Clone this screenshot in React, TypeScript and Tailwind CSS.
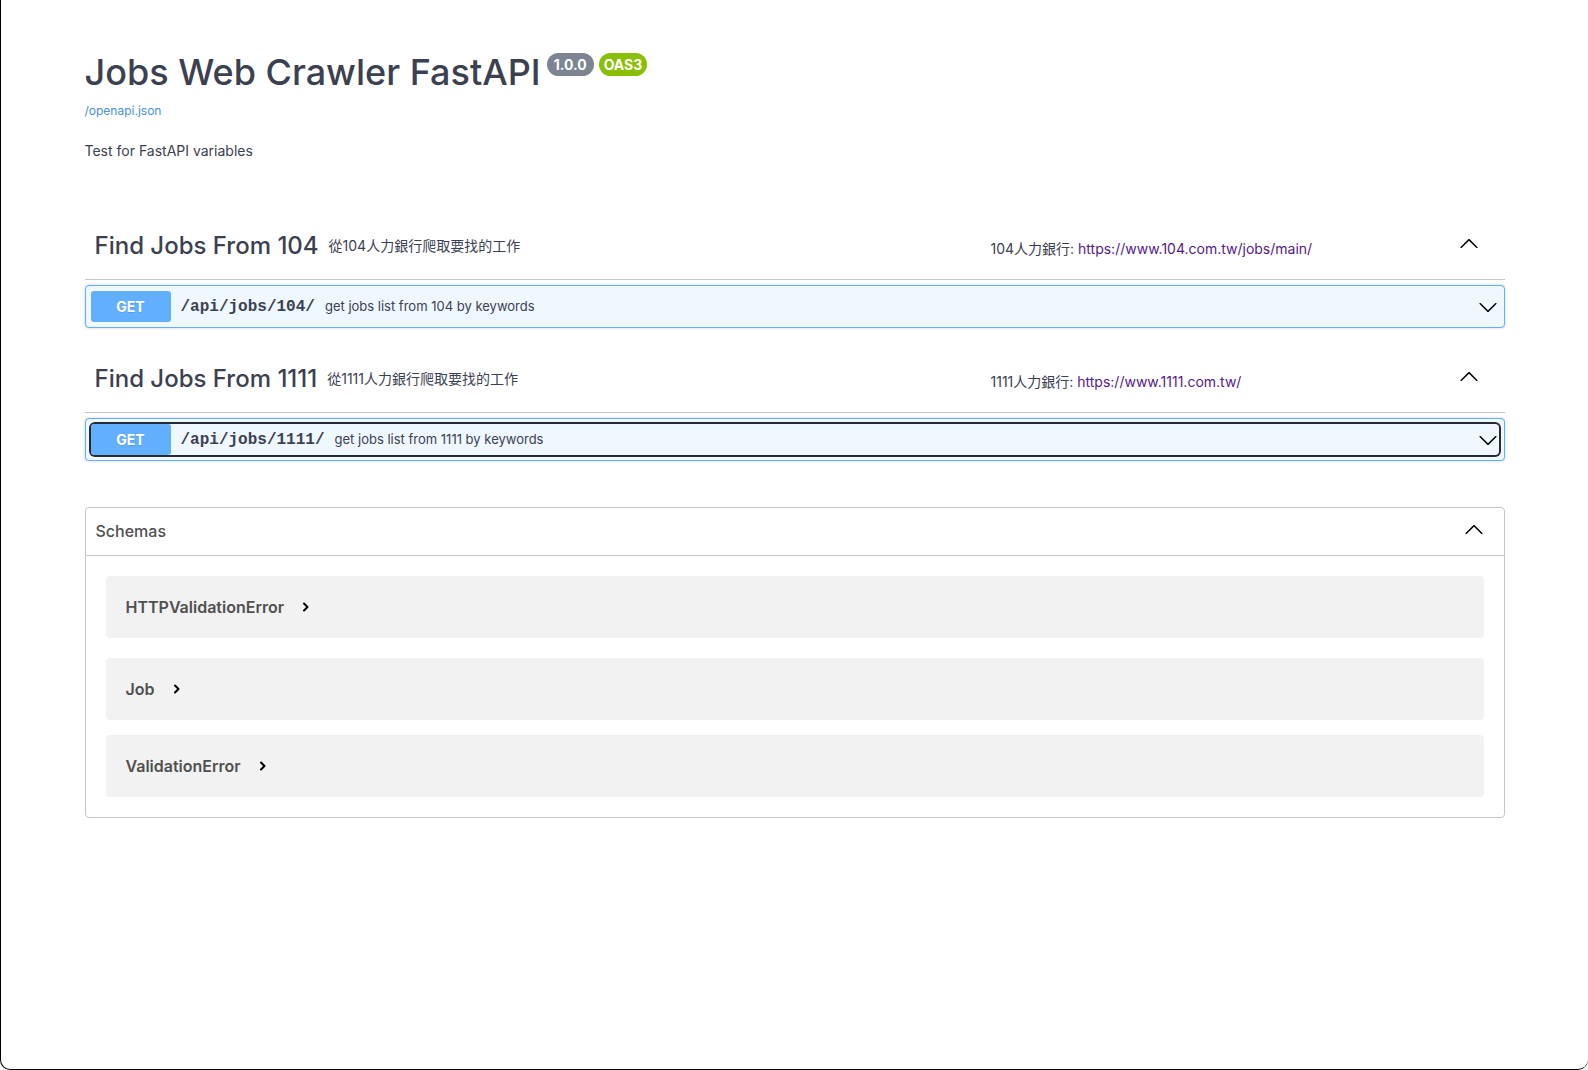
import React from 'react';

const sans = "font-[family-name:Inter,'Noto_Sans_CJK_TC',sans-serif]";

const ArrowUp = () => (
  <svg width="20" height="20" viewBox="0 0 20 20" className="relative -top-[3px] fill-black">
    <path d="M17.418 14.908c.272.268.709.268.979 0s.271-.701 0-.969l-7.908-7.83c-.27-.268-.707-.268-.979 0l-7.908 7.83c-.27.268-.27.701 0 .969.271.268.709.268.979 0L10 7.767l7.418 7.141z" />
  </svg>
);

const ArrowDown = () => (
  <svg width="20" height="20" viewBox="0 0 20 20" className="fill-black">
    <path d="M17.418 6.109c.272-.268.709-.268.979 0s.271.701 0 .969l-7.908 7.83c-.27.268-.707.268-.979 0l-7.908-7.83c-.27-.268-.27-.701 0-.969.271-.268.709-.268.979 0L10 13.25l7.418-7.141z" />
  </svg>
);

const Chevron = () => (
  <svg width="8" height="12" viewBox="0 0 8 12" fill="none" className="stroke-black">
    <polyline points="2,2.5 5.5,6 2,9.5" strokeWidth="2" strokeLinecap="round" strokeLinejoin="round" />
  </svg>
);

type Tag = {
  name: string;
  desc: string;
  docsLabel: string;
  docsUrl: string;
  path: string;
  summary: string;
  focused?: boolean;
};

const tags: Tag[] = [
  {
    name: 'Find Jobs From 104',
    desc: '從104人力銀行爬取要找的工作',
    docsLabel: '104人力銀行:',
    docsUrl: 'https://www.104.com.tw/jobs/main/',
    path: '/api/jobs/104/',
    summary: 'get jobs list from 104 by keywords',
  },
  {
    name: 'Find Jobs From 1111',
    desc: '從1111人力銀行爬取要找的工作',
    docsLabel: '1111人力銀行:',
    docsUrl: 'https://www.1111.com.tw/',
    path: '/api/jobs/1111/',
    summary: 'get jobs list from 1111 by keywords',
    focused: true,
  },
];

const TagSection = ({ tag }: { tag: Tag }) => (
  <div>
    <div className="flex h-[68px] items-center border-b border-[#c4c6cb] pl-[10px] pr-[20px] text-[#3b4151]">
      <span className="text-[24px] font-medium leading-[30px]">{tag.name}</span>
      <span className="flex-1 px-[10px] text-[14px]">{tag.desc}</span>
      <div className="w-[468px] pt-[6px] text-[14px]">
        {tag.docsLabel} <span className="text-[#551a8b]">{tag.docsUrl}</span>
      </div>
      <button className="mr-[6px] flex h-5 w-5 items-center justify-center">
        <ArrowUp />
      </button>
    </div>
    <div className="mb-[17px] mt-[5px] rounded-[4px] border border-[#61affe] bg-[#eff7ff] p-[5px] shadow-[0_0_3px_rgba(0,0,0,0.19)]">
      <div className={`flex h-[31px] items-center rounded-[4px] ${tag.focused ? 'ring-2 ring-[#262a33]' : ''}`}>
        <span className="flex h-[31px] w-[80px] items-center justify-center rounded-[3px] bg-[#61affe] text-[14px] font-bold text-white [text-shadow:0_1px_0_rgba(0,0,0,0.1)]">
          GET
        </span>
        <span className="px-[10px] font-[family-name:'Liberation_Mono',monospace] text-[16px] font-bold text-[#3b4151]">
          {tag.path}
        </span>
        <span className="flex-1 text-[13px] text-[#3b4151]">{tag.summary}</span>
        <span className="mr-px">
          <ArrowDown />
        </span>
      </div>
    </div>
  </div>
);

const models = ['HTTPValidationError', 'Job', 'ValidationError'];

export default function App() {
  return (
    <div className={`h-[1070px] overflow-hidden rounded-b-[10px] border-b border-l border-black bg-white ${sans}`}>
      <div className="mx-auto max-w-[1460px] px-5 pt-[50px]">
        <div className="flex items-start text-[#3b4151]">
          <h2 className="text-[36px] font-medium leading-[44px]">Jobs Web Crawler FastAPI</h2>
          <span className="ml-[6px] mt-[3px] flex h-[23px] items-center rounded-[57px] bg-[#7d8492] px-[7px] text-[14px] font-bold text-white">
            1.0.0
          </span>
          <span className="ml-[5px] mt-[3px] flex h-[23px] items-center rounded-[57px] bg-[#89bf04] px-[5px] text-[14px] font-bold text-white">
            OAS3
          </span>
        </div>
        <div className="mt-[9px] text-[12px] leading-[16px] text-[#4990e2]">/openapi.json</div>
        <p className="mt-[22px] text-[14px] leading-[20px] text-[#3b4151]">Test for FastAPI variables</p>

        <div className="mt-[51px]">
          {tags.map((t) => (
            <TagSection key={t.path} tag={t} />
          ))}
        </div>

        <div className="mt-[46px] rounded-[4px] border border-[#c4c6cb]">
          <div className="flex h-[48px] items-center justify-between border-b border-[#c4c6cb] pl-[10px] pr-[20px]">
            <span className="relative -top-[1px] text-[16px] font-medium text-[#505050]">Schemas</span>
            <ArrowUp />
          </div>
          <div className="pt-[20px]">
            {models.map((name, i) => (
              <div
                key={name}
                className={`mx-[20px] flex h-[62px] items-center gap-[18px] rounded-[4px] bg-[#f2f2f2] px-[20px] ${i === 1 ? 'mb-[15px]' : 'mb-[20px]'}`}
              >
                <span className="text-[16px] font-semibold text-[#505050]">{name}</span>
                <Chevron />
              </div>
            ))}
          </div>
        </div>
      </div>
    </div>
  );
}
